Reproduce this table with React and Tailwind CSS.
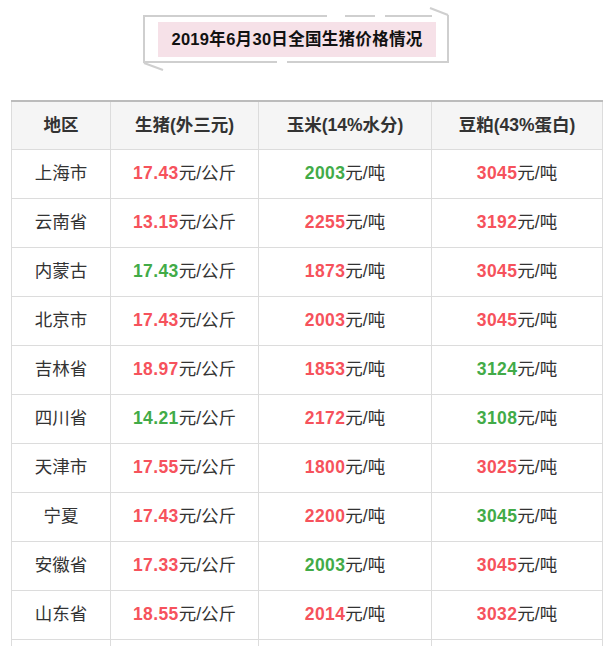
import React from 'react';

const RED = 'r';
const GREEN = 'g';

const rows = [
  ['上海市', ['17.43', RED], ['2003', GREEN], ['3045', RED]],
  ['云南省', ['13.15', RED], ['2255', RED], ['3192', RED]],
  ['内蒙古', ['17.43', GREEN], ['1873', RED], ['3045', RED]],
  ['北京市', ['17.43', RED], ['2003', RED], ['3045', RED]],
  ['吉林省', ['18.97', RED], ['1853', RED], ['3124', GREEN]],
  ['四川省', ['14.21', GREEN], ['2172', RED], ['3108', GREEN]],
  ['天津市', ['17.55', RED], ['1800', RED], ['3025', RED]],
  ['宁夏', ['17.43', RED], ['2200', RED], ['3045', GREEN]],
  ['安徽省', ['17.33', RED], ['2003', GREEN], ['3045', RED]],
  ['山东省', ['18.55', RED], ['2014', RED], ['3032', RED]],
];

function Price({ value, tone, unit }) {
  return (
    <span>
      <b className={tone === GREEN ? 'font-bold tracking-[0.4px] text-[#42ab48]' : 'font-bold tracking-[0.4px] text-[#f6525c]'}>{value}</b>
      <span className="text-[#333]">{unit}</span>
    </span>
  );
}

function TitleFrame() {
  return (
    <div className="relative ml-[134px] mt-[5px] h-[68px] w-[320px] pt-[17px]">
      {/* decorative frame around the title */}
      <svg className="absolute inset-0" width="320" height="68" viewBox="0 0 320 68" fill="none" stroke="#cfcfcf" strokeWidth="2">
        <path d="M10 11 H193 M211 11 H241 M251 11 H298" />
        <path d="M296 3 L314 10" />
        <path d="M314 10 V58" />
        <path d="M10 10 V58" />
        <path d="M10 57 H143 M153 57 H315" />
        <path d="M10 58 L29 65" />
      </svg>
      <div className="relative ml-[24px] flex h-[35px] w-[278px] items-center justify-center bg-[#f6e1e8]">
        <span className="text-[16.5px] font-bold tracking-[0.3px] text-[#111]">2019年6月30日全国生猪价格情况</span>
      </div>
    </div>
  );
}

export default function App() {
  return (
    <div
      className="min-h-[646px] bg-white"
      style={{ fontFamily: '"Liberation Sans", "Noto Sans CJK SC", sans-serif' }}
    >
      <TitleFrame />

      <div className="ml-[11px] mt-[27px] w-[591px]">
        <table className="w-full table-fixed border-collapse text-[17.5px] text-[#333]">
          <colgroup>
            <col className="w-[99px]" />
            <col className="w-[148px]" />
            <col className="w-[173px]" />
            <col className="w-[171px]" />
          </colgroup>
          <thead>
            <tr className="h-[48px] border-t-2 border-t-[#bcbcbc] bg-[#f5f5f5]">
              <th className="border border-[#dcdcdc] border-t-[#bcbcbc] font-bold">地区</th>
              <th className="border border-[#dcdcdc] border-t-[#bcbcbc] font-bold">生猪(外三元)</th>
              <th className="border border-[#dcdcdc] border-t-[#bcbcbc] font-bold">玉米(14%水分)</th>
              <th className="border border-[#dcdcdc] border-t-[#bcbcbc] font-bold">豆粕(43%蛋白)</th>
            </tr>
          </thead>
          <tbody>
            {rows.map(([region, pig, corn, soy]) => (
              <tr key={region} className="h-[49px]">
                <td className="border border-[#dcdcdc] text-center">{region}</td>
                <td className="border border-[#dcdcdc] text-center">
                  <Price value={pig[0]} tone={pig[1]} unit="元/公斤" />
                </td>
                <td className="border border-[#dcdcdc] text-center">
                  <Price value={corn[0]} tone={corn[1]} unit="元/吨" />
                </td>
                <td className="border border-[#dcdcdc] text-center">
                  <Price value={soy[0]} tone={soy[1]} unit="元/吨" />
                </td>
              </tr>
            ))}
            <tr className="h-[49px]">
              <td className="border border-[#dcdcdc]" />
              <td className="border border-[#dcdcdc]" />
              <td className="border border-[#dcdcdc]" />
              <td className="border border-[#dcdcdc]" />
            </tr>
          </tbody>
        </table>
      </div>
    </div>
  );
}
